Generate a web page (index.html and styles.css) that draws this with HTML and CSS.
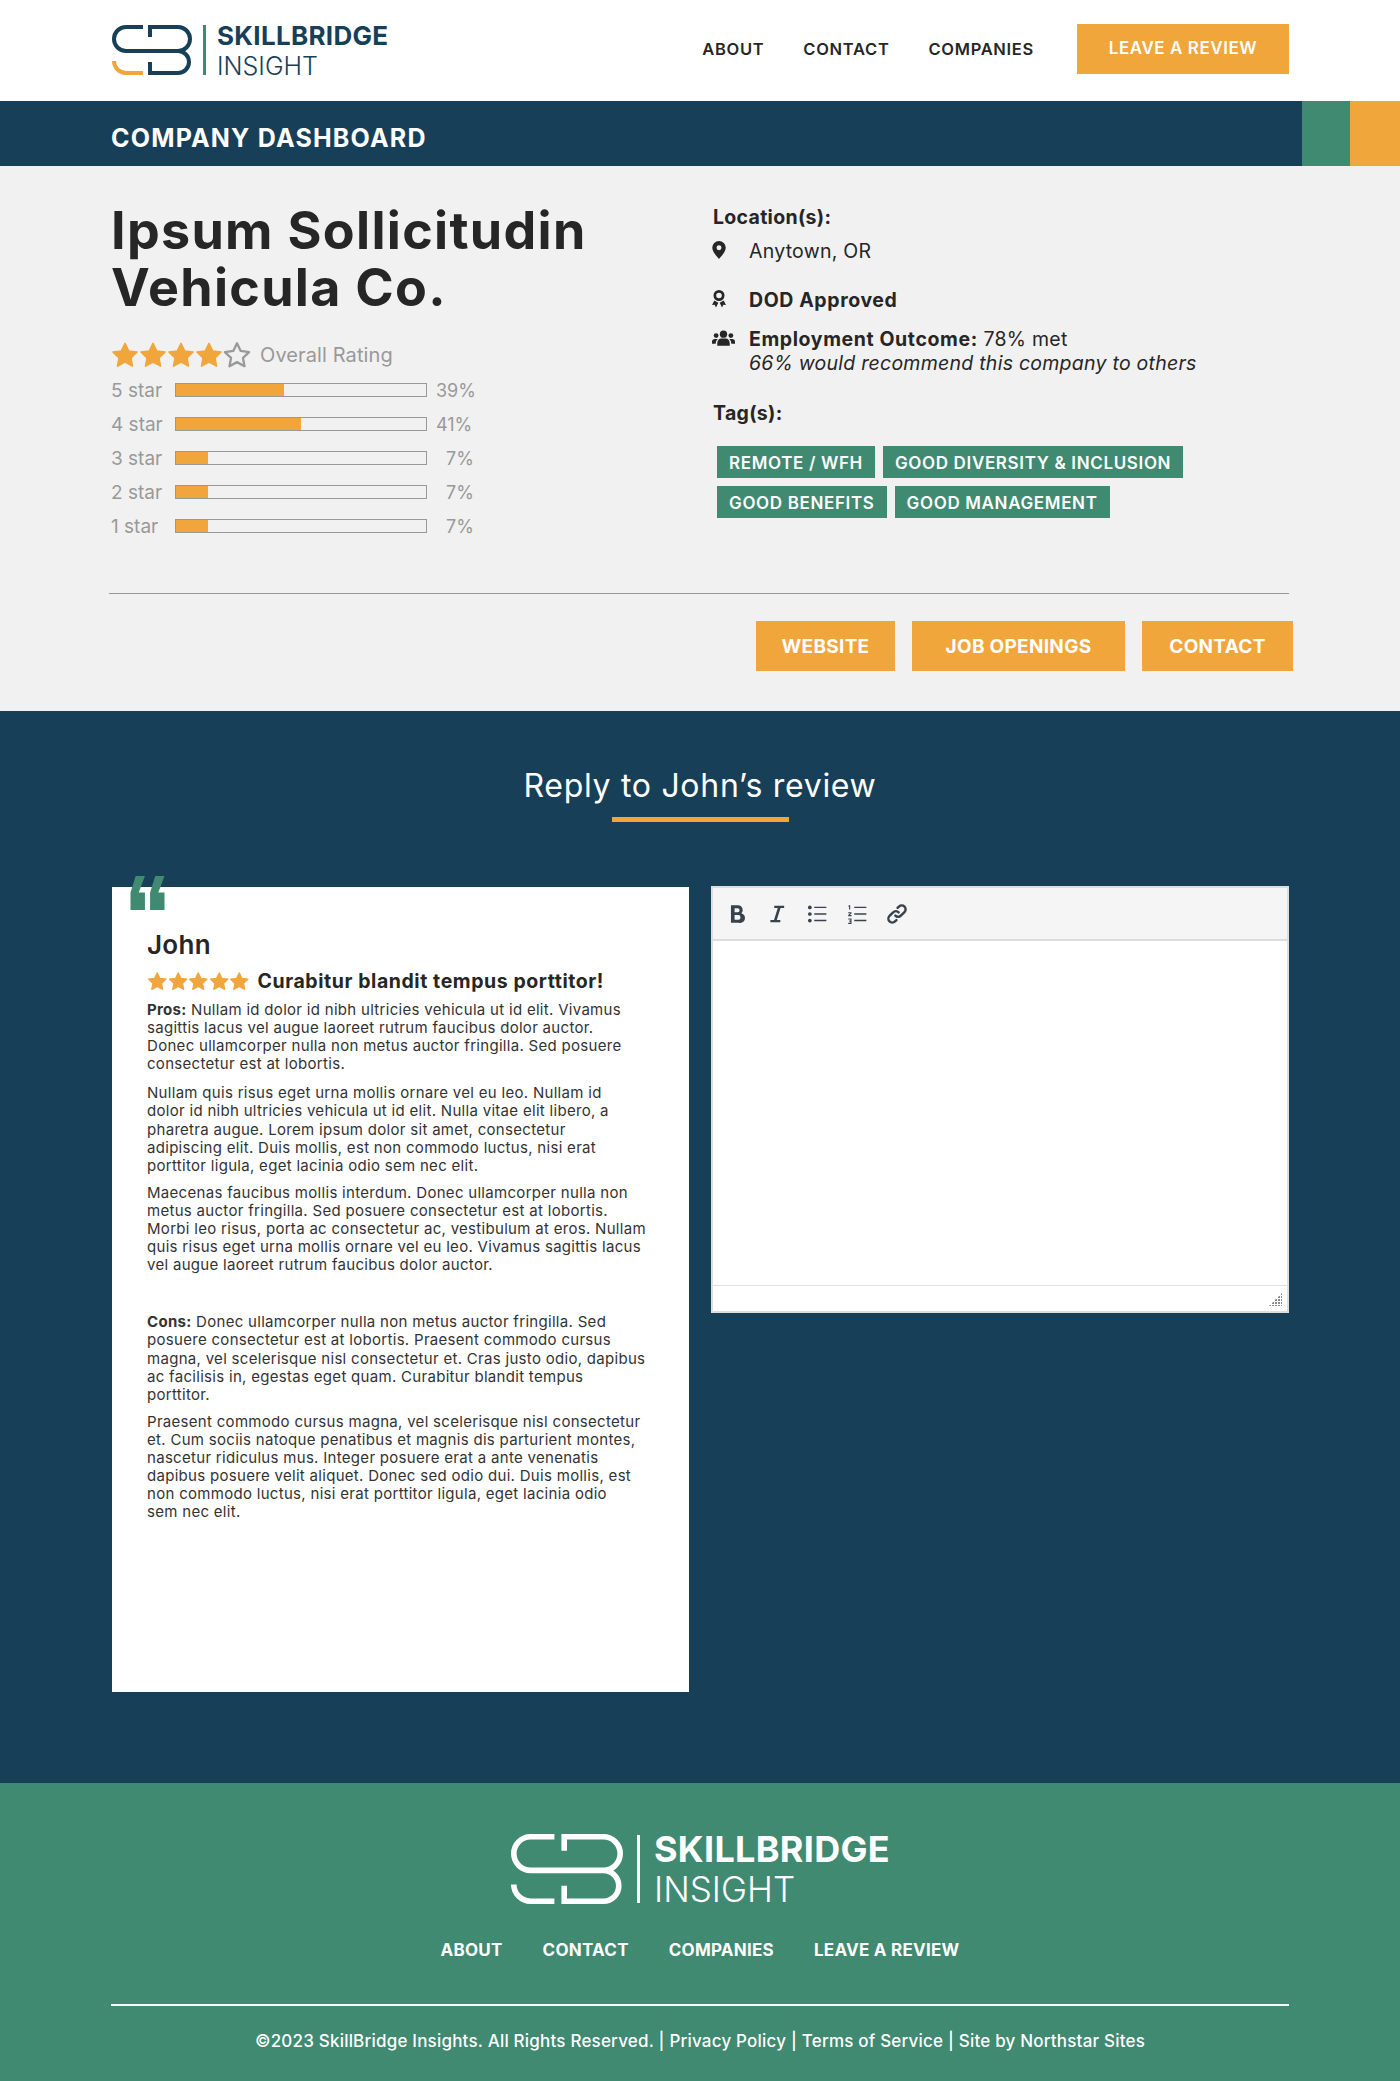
FILE: index.html
```html
<!DOCTYPE HTML>
<html>
<head>
    <title>Reply to John's review</title>
    <link rel="stylesheet" href="styles.css">
</head>
<body>
    <svg class="defs" width="0" height="0">
        <symbol id="star" viewBox="1 1 22 22"><path d="M12 2.800l2.900 6 6.600.9-4.800 4.600 1.200 6.500-5.900-3.200-5.900 3.200 1.200-6.500-4.800-4.600 6.600-.9z"/></symbol>
        <symbol id="mark" viewBox="0 0 80 50">
            <path d="M31 2H14a12 12 0 0 0 0 24h52a11 11 0 0 1 0 22H38V37M38 12V2h28a12 12 0 0 1 0 24" fill="none" stroke-width="4"/>
            <path class="mark-low" d="M2 36a12 12 0 0 0 12 12h17" fill="none" stroke-width="4"/>
        </symbol>
    </svg>

    <header class="top">
        <div class="wrap top-row">
            <a class="logo" href="#">
                <svg class="logo-mark" width="80" height="50"><use href="#mark"/></svg>
                <span class="logo-bar"></span>
                <span class="logo-text"><b>SKILLBRIDGE</b><span>INSIGHT</span></span>
            </a>
            <nav class="top-nav">
                <a href="#">ABOUT</a>
                <a href="#">CONTACT</a>
                <a href="#">COMPANIES</a>
                <a class="btn top-btn" href="#">LEAVE A REVIEW</a>
            </nav>
        </div>
    </header>

    <div class="band">
        <div class="wrap band-title">COMPANY DASHBOARD</div>
        <div class="band-green"></div>
        <div class="band-orange"></div>
    </div>

    <section class="company">
        <div class="wrap">
            <div class="company-cols">
                <div class="company-left">
                    <h1>Ipsum Sollicitudin Vehicula Co.</h1>
                    <div class="overall">
                        <span class="stars">
                            <svg><use href="#star"/></svg><svg><use href="#star"/></svg><svg><use href="#star"/></svg><svg><use href="#star"/></svg><svg class="star-empty"><use href="#star"/></svg>
                        </span>
                        <span>Overall Rating</span>
                    </div>
                    <div class="bar-row"><span class="bar-label">5 star</span><span class="bar"><i style="width:43%"></i></span><span class="bar-pct">39%</span></div>
                    <div class="bar-row"><span class="bar-label">4 star</span><span class="bar"><i style="width:50%"></i></span><span class="bar-pct">41%</span></div>
                    <div class="bar-row"><span class="bar-label">3 star</span><span class="bar"><i style="width:12.7%"></i></span><span class="bar-pct pad">7%</span></div>
                    <div class="bar-row"><span class="bar-label">2 star</span><span class="bar"><i style="width:12.7%"></i></span><span class="bar-pct pad">7%</span></div>
                    <div class="bar-row"><span class="bar-label">1 star</span><span class="bar"><i style="width:12.7%"></i></span><span class="bar-pct pad">7%</span></div>
                </div>
                <div class="company-right">
                    <h4>Location(s):</h4>
                    <div class="info info-loc">
                        <svg class="ico" viewBox="3 0 18 24"><path fill-rule="evenodd" d="M12 0a9 9 0 0 0-9 9c0 5.500 6.500 12 9 15 2.500-3 9-9.500 9-15a9 9 0 0 0-9-9zm0 12.200a3.300 3.300 0 1 1 0-6.600 3.300 3.300 0 0 1 0 6.600z"/></svg>
                        <span>Anytown, OR</span>
                    </div>
                    <div class="info info-dod">
                        <svg class="ico" viewBox="0 0 14 18"><path fill-rule="evenodd" d="M7 0a5.500 5.500 0 1 0 0 11A5.500 5.500 0 0 0 7 0zm0 2.700a2.800 2.800 0 1 1 0 5.600 2.800 2.800 0 0 1 0-5.600z"/><path d="M2.300 10.500L0 15l2.600-.2L4 17.500l2.300-4.700zM11.700 10.500L14 15l-2.600-.2L10 17.500l-2.300-4.700z"/></svg>
                        <b>DOD Approved</b>
                    </div>
                    <div class="info info-emp">
                        <svg class="ico ico-wide" viewBox="0 0 24 18"><circle cx="12" cy="5" r="3.800"/><circle cx="4.300" cy="6.500" r="2.500"/><circle cx="19.700" cy="6.500" r="2.500"/><path d="M5.500 17v-2.500c0-3 2-5 4-5h5c2 0 4 2 4 5V17zM0 15v-2c0-2 1.200-3 3-3h3a6 6 0 0 0-2.200 5zM24 15v-2c0-2-1.200-3-3-3h-3a6 6 0 0 1 2.200 5z"/></svg>
                        <span><b>Employment Outcome:</b> 78% met<br><em>66% would recommend this company to others</em></span>
                    </div>
                    <h4 class="tags-head">Tag(s):</h4>
                    <div class="tags">
                        <span>REMOTE / WFH</span>
                        <span>GOOD DIVERSITY &amp; INCLUSION</span>
                        <span>GOOD BENEFITS</span>
                        <span>GOOD MANAGEMENT</span>
                    </div>
                </div>
            </div>
            <div class="company-actions">
                <a class="btn act-website" href="#">WEBSITE</a>
                <a class="btn act-jobs" href="#">JOB OPENINGS</a>
                <a class="btn act-contact" href="#">CONTACT</a>
            </div>
        </div>
    </section>

    <section class="reply">
        <h2>Reply to John’s review</h2>
        <div class="rule"></div>
        <div class="wrap reply-cols">
            <article class="review">
                <svg class="quote" viewBox="0 0 33 33"><path d="M5 0h9L8 16h6v17H0V16zM24 0h9l-6 16h6v17H19V16z"/></svg>
                <h3>John</h3>
                <div class="review-head">
                    <span class="stars small">
                        <svg><use href="#star"/></svg><svg><use href="#star"/></svg><svg><use href="#star"/></svg><svg><use href="#star"/></svg><svg><use href="#star"/></svg>
                    </span>
                    <b>Curabitur blandit tempus porttitor!</b>
                </div>
                <p class="first"><b>Pros:</b> Nullam id dolor id nibh ultricies vehicula ut id elit. Vivamus<br>sagittis lacus vel augue laoreet rutrum faucibus dolor auctor.<br>Donec ullamcorper nulla non metus auctor fringilla. Sed posuere<br>consectetur est at lobortis.</p>
                <p>Nullam quis risus eget urna mollis ornare vel eu leo. Nullam id<br>dolor id nibh ultricies vehicula ut id elit. Nulla vitae elit libero, a<br>pharetra augue. Lorem ipsum dolor sit amet, consectetur<br>adipiscing elit. Duis mollis, est non commodo luctus, nisi erat<br>porttitor ligula, eget lacinia odio sem nec elit.</p>
                <p class="gap">Maecenas faucibus mollis interdum. Donec ullamcorper nulla non<br>metus auctor fringilla. Sed posuere consectetur est at lobortis.<br>Morbi leo risus, porta ac consectetur ac, vestibulum at eros. Nullam<br>quis risus eget urna mollis ornare vel eu leo. Vivamus sagittis lacus<br>vel augue laoreet rutrum faucibus dolor auctor.</p>
                <p><b>Cons:</b> Donec ullamcorper nulla non metus auctor fringilla. Sed<br>posuere consectetur est at lobortis. Praesent commodo cursus<br>magna, vel scelerisque nisl consectetur et. Cras justo odio, dapibus<br>ac facilisis in, egestas eget quam. Curabitur blandit tempus<br>porttitor.</p>
                <p>Praesent commodo cursus magna, vel scelerisque nisl consectetur<br>et. Cum sociis natoque penatibus et magnis dis parturient montes,<br>nascetur ridiculus mus. Integer posuere erat a ante venenatis<br>dapibus posuere velit aliquet. Donec sed odio dui. Duis mollis, est<br>non commodo luctus, nisi erat porttitor ligula, eget lacinia odio<br>sem nec elit.</p>
            </article>
            <div class="editor">
                <div class="editor-bar">
                    <svg viewBox="0 0 20 20"><path d="M4.500 2h6.500a4.300 4.300 0 0 1 3 7.300 4.500 4.500 0 0 1-2.500 8.700h-7zM7.800 4.800v3.500h2.800a1.750 1.750 0 0 0 0-3.500zm0 6.200v4.200h3.300a2.100 2.100 0 0 0 0-4.200z" fill-rule="evenodd"/></svg>
                    <svg viewBox="0 0 20 20"><path d="M7.500 2.500h9v2h-3.300l-3.400 11h3.200v2h-9v-2h3.300l3.400-11H7.500z"/></svg>
                    <svg viewBox="0 0 20 20"><circle cx="3.500" cy="4" r="1.700"/><circle cx="3.500" cy="10" r="1.700"/><circle cx="3.500" cy="16" r="1.700"/><path d="M7.500 3.300h11v1.300h-11zM7.500 9.300h11v1.300h-11zM7.500 15.300h11v1.300h-11z"/></svg>
                    <svg viewBox="0 0 20 20"><path d="M2.500 2h1.300v4H2.800V3.200H2zM2 8.500h3v1L3.300 11H5v1H2v-1l1.800-1.600H2zM2 14h3v5H2v-1h2v-1H3v-1h1v-1H2zM7.500 3.300h11v1.300h-11zM7.500 9.300h11v1.300h-11zM7.500 15.300h11v1.300h-11z"/></svg>
                    <svg viewBox="0 0 20 20" class="link"><path d="M8.500 11.500a3.400 3.400 0 0 0 5 0l3.300-3.300a3.500 3.500 0 0 0-5-5L10.500 4.500M11.500 8.500a3.400 3.400 0 0 0-5 0l-3.300 3.300a3.500 3.500 0 0 0 5 5l1.300-1.300" fill="none" stroke-width="2.200" stroke-linecap="round"/></svg>
                </div>
                <div class="editor-body"></div>
                <div class="editor-foot"><span class="grip"></span></div>
            </div>
        </div>
    </section>

    <footer class="foot">
        <a class="logo foot-logo" href="#">
            <svg class="logo-mark" width="112" height="70"><use href="#mark"/></svg>
            <span class="logo-bar"></span>
            <span class="logo-text"><b>SKILLBRIDGE</b><span>INSIGHT</span></span>
        </a>
        <nav class="foot-nav">
            <a href="#">ABOUT</a>
            <a href="#">CONTACT</a>
            <a href="#">COMPANIES</a>
            <a href="#">LEAVE A REVIEW</a>
        </nav>
        <div class="wrap foot-line">
            <p>©2023 SkillBridge Insights. All Rights Reserved. | Privacy Policy | Terms of Service | Site by Northstar Sites</p>
        </div>
    </footer>
</body>
</html>
```

FILE: styles.css
```css
*
{
    box-sizing: border-box;
}

body
{
    margin: 0;
    font-family: Inter, "Noto Sans", sans-serif;
    color: #262626;
    background: #fff;
}

a
{
    color: inherit;
    text-decoration: none;
}

.defs
{
    position: absolute;
}

.wrap
{
    width: 1178px;
    margin-left: 111px;
}

.btn
{
    display: flex;
    align-items: center;
    justify-content: center;
    height: 50px;
    background: #f1a63c;
    color: #fff;
    font-weight: 700;
}

/* header */
.top
{
    height: 101px;
}

.top-row
{
    display: flex;
    justify-content: space-between;
    align-items: center;
    height: 100px;
}

.logo
{
    --low: #f1a63c;
    display: flex;
    align-items: center;
    color: #183f58;
}

.logo-mark
{
    display: block;
    margin-left: 1px;
    stroke: #183f58;
}

.mark-low
{
    stroke: var(--low);
}

.logo-bar
{
    width: 3px;
    height: 50px;
    margin: 0 11px 0 11px;
    background: #3f8a71;
}

.logo-text
{
    display: flex;
    flex-direction: column;
    align-items: flex-start;
    font-size: 26px;
    line-height: 30px;
    padding-top: 1px;
}

.logo-text b
{
    font-weight: 700;
    letter-spacing: .3px;
}

.logo-text span
{
    font-size: 25px;
    font-weight: 300;
}

.top-nav
{
    display: flex;
    align-items: center;
    font-size: 16.500px;
    font-weight: 600;
    letter-spacing: .7px;
}

.top-nav a
{
    margin-left: 39px;
    margin-bottom: 2px;
}

.top-nav a.btn
{
    width: 212px;
    height: 50px;
    margin-left: 43px;
    padding-bottom: 2px;
    font-size: 17px;
    font-weight: 600;
    letter-spacing: .55px;
}

/* title band */
.band
{
    display: flex;
    height: 65px;
    background: #183f58;
}

.band-title
{
    flex: none;
    width: 1191px;
    height: 65px;
    line-height: 74px;
    color: #fff;
    font-size: 25px;
    font-weight: 700;
    letter-spacing: 1.200px;
}

.band-green
{
    width: 48px;
    background: #3f8a71;
}

.band-orange
{
    flex: 1;
    background: #f1a63c;
}

/* company */
.company
{
    height: 545px;
    background: #f1f1f1;
}

.company-cols
{
    display: flex;
    height: 428px;
    border-bottom: 1px solid #999;
    margin-left: -2px;
    padding-left: 2px;
}

.company-left
{
    width: 602px;
    padding-top: 36px;
}

h1
{
    margin: 0 0 25px;
    font-size: 52px;
    line-height: 57px;
    font-weight: 700;
    letter-spacing: 1.300px;
}

.overall
{
    display: flex;
    align-items: center;
    height: 28px;
    margin-bottom: 4px;
    color: #999;
    font-size: 20px;
    letter-spacing: .1px;
}

.stars
{
    display: flex;
    margin-right: 9px;
}

.stars svg
{
    width: 28px;
    height: 28px;
    fill: #f1a63c;
    stroke: #f1a63c;
    stroke-width: 1.200;
    stroke-linejoin: round;
}

.stars svg.star-empty
{
    fill: none;
    stroke: #999;
    stroke-width: 1.800;
}

.bar-row
{
    display: flex;
    align-items: center;
    height: 34px;
    color: #999;
    font-size: 19px;
}

.bar-label
{
    width: 64px;
}

.bar
{
    width: 252px;
    height: 14px;
    border: 1px solid #999;
    background: #f1f1f1;
}

.bar i
{
    display: block;
    height: 12px;
    background: #f1a63c;
}

.bar-pct
{
    margin-left: 9px;
    font-size: 18px;
}

.bar-pct.pad
{
    margin-left: 19px;
}

.company-right
{
    padding-top: 38px;
    font-size: 19.500px;
    letter-spacing: .25px;
}

.company-right b
{
    letter-spacing: .6px;
}

h4
{
    margin: 0;
    font-size: 19.500px;
    line-height: 26px;
    font-weight: 700;
    letter-spacing: .3px;
}

.info
{
    display: flex;
    line-height: 24px;
}

.ico
{
    flex: none;
    width: 14px;
    height: 18px;
    margin-right: 23px;
    margin-top: 2px;
    margin-left: -1px;
    fill: #262626;
}

.ico-wide
{
    width: 23px;
    margin-right: 14px;
}

.info-loc
{
    margin-top: 9px;
}

.info-dod
{
    margin-top: 25px;
}

.info-emp
{
    margin-top: 15px;
}

.tags-head
{
    margin-top: 25px;
}

.tags
{
    display: flex;
    flex-wrap: wrap;
    gap: 8px;
    width: 500px;
    margin: 20px 0 0 4px;
}

.tags span
{
    height: 32px;
    padding: 0 12px;
    line-height: 34px;
    background: #3f8a71;
    color: #fff;
    font-size: 17px;
    font-weight: 600;
    letter-spacing: .65px;
}

.company-actions
{
    display: flex;
    justify-content: flex-end;
    gap: 17px;
    margin-top: 27px;
    margin-right: -4px;
    font-size: 19px;
    letter-spacing: .3px;
}

.act-website
{
    width: 139px;
}

.act-jobs
{
    width: 213px;
}

.act-contact
{
    width: 151px;
}

/* reply */
.reply
{
    height: 1072px;
    background: #183f58;
    text-align: center;
}

h2
{
    margin: 0;
    padding-top: 54px;
    color: #fff;
    font-size: 32px;
    line-height: 42px;
    font-weight: 400;
    letter-spacing: .7px;
}

.rule
{
    width: 177px;
    height: 5px;
    margin: 10px auto 0;
    background: #f1a63c;
}

.reply-cols
{
    display: flex;
    align-items: flex-start;
    margin-top: 65px;
    text-align: left;
}

.review
{
    position: relative;
    width: 577px;
    height: 805px;
    margin-left: 1px;
    padding: 42px 35px 0;
    background: #fff;
    color: #333;
    font-size: 15px;
    line-height: 18.100px;
    letter-spacing: .3px;
}

.quote
{
    position: absolute;
    left: 17px;
    top: -11px;
    width: 37px;
    height: 34px;
    fill: #3f8a71;
}

h3
{
    margin: 0;
    color: #262626;
    font-size: 26px;
    line-height: 32px;
    font-weight: 600;
}

.review-head
{
    display: flex;
    align-items: center;
    height: 24px;
    margin-top: 8px;
    margin-bottom: 8px;
    color: #262626;
    font-size: 19.500px;
    letter-spacing: .57px;
}

.review-head b
{
    font-weight: 700;
}

.stars.small
{
    margin-right: 8px;
}

.stars.small svg
{
    width: 20.500px;
    height: 20.500px;
}

.review p
{
    margin: 0 0 9px;
    white-space: nowrap;
}

.review p.first
{
    margin-bottom: 11px;
}

.review p.gap
{
    margin-bottom: 39px;
}

.editor
{
    width: 578px;
    height: 427px;
    margin-left: 22px;
    margin-top: -1px;
    border: 2px solid #ddd;
    background: #fff;
}

.editor-bar
{
    display: flex;
    align-items: center;
    gap: 18px;
    height: 53px;
    padding-left: 13px;
    background: #f5f5f5;
    border-bottom: 2px solid #ddd;
}

.editor-bar svg
{
    width: 22px;
    height: 22px;
    fill: #37424d;
    stroke: none;
}

.editor-bar svg.link
{
    stroke: #37424d;
}

.editor-body
{
    height: 344px;
}

.editor-foot
{
    display: flex;
    justify-content: flex-end;
    align-items: flex-end;
    height: 26px;
    border-top: 1px solid #ddd;
    padding: 0 5px 5px 0;
}

.grip
{
    width: 13px;
    height: 13px;
    background: radial-gradient(circle at 1px 1px, #888 1px, transparent 1px) 0 0 / 3px 3px;
    clip-path: polygon(100% 0, 100% 100%, 0 100%);
}

/* footer */
.foot
{
    height: 298px;
    background: #3f8a71;
    text-align: center;
    color: #fff;
}

.foot-logo
{
    --low: #fff;
    justify-content: center;
    padding-top: 45px;
    color: #fff;
}

.foot-logo .logo-mark
{
    stroke: #fff;
}

.foot-logo .logo-bar
{
    height: 68px;
    background: #fff;
    margin: 0 14px 0 14px;
}

.foot-logo .logo-text
{
    font-size: 36px;
    line-height: 40px;
}

.foot-logo .logo-text span
{
    font-size: 35px;
}

.foot-nav
{
    display: flex;
    justify-content: center;
    gap: 40px;
    margin-top: 31px;
    font-size: 17px;
    font-weight: 700;
    letter-spacing: .25px;
}

.foot-line
{
    margin-top: 44px;
    border-top: 2px solid #fff;
}

.foot-line p
{
    margin: 0;
    padding-top: 25px;
    font-size: 17px;
    font-weight: 500;
    letter-spacing: .2px;
}
```
